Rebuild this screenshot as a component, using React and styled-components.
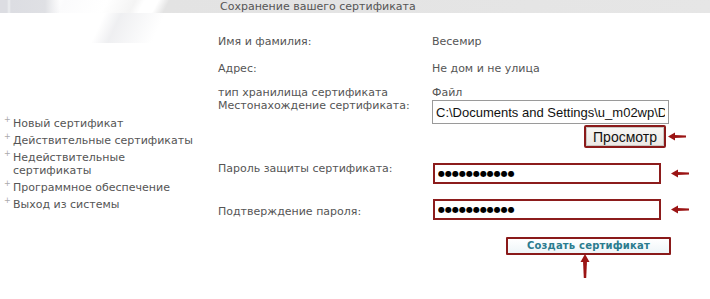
import styled, { createGlobalStyle } from 'styled-components'

const GlobalStyle = createGlobalStyle`
  html, body {
    margin: 0;
    padding: 0;
    background: #fff;
  }
  body {
    font-family: "DejaVu Sans", Verdana, sans-serif;
    font-size: 11px;
    color: #555;
  }
`

const navItems = [
  'Новый сертификат',
  'Действительные сертификаты',
  'Недействительные сертификаты',
  'Программное обеспечение',
  'Выход из системы',
]

const LeftArrow = () => (
  <svg width="19" height="9" viewBox="0 0 19 9">
    <polygon points="0,4.5 7,0.5 7,8.5" fill="#9b1414" />
    <polygon points="6,3 18,3.6 18,5.4 6,6" fill="#9b1414" />
  </svg>
)

const UpArrow = () => (
  <svg width="10" height="25" viewBox="0 0 10 25">
    <polygon points="5,0 9.5,8 0.5,8" fill="#9b1414" />
    <polygon points="3,7 7,7 6.2,24 3.8,24" fill="#9b1414" />
  </svg>
)

const App = () => {
  return (
    <Page>
      <GlobalStyle />
      <Header>
        <Title>Сохранение вашего сертификата</Title>
      </Header>
      <Body>
        <Sidebar>
          <NavList>
            {navItems.map(item => (
              <NavItem key={item}>
                <Marker>+</Marker>
                <NavLink>{item}</NavLink>
              </NavItem>
            ))}
          </NavList>
        </Sidebar>
        <Main>
          <Row top={22}>
            <Label>Имя и фамилия:</Label>
            <Value>Весемир</Value>
          </Row>
          <Row top={14}>
            <Label>Адрес:</Label>
            <Value>Не дом и не улица</Value>
          </Row>
          <Row top={11}>
            <Label>
              тип хранилища сертификата
              <br />
              Местонахождение сертификата:
            </Label>
            <Field>
              <Value>Файл</Value>
              <PathInput type="text" readOnly value="C:\Documents and Settings\u_m02wp\Desktop\cert.pfx" />
            </Field>
          </Row>
          <Row top={1}>
            <span />
            <BrowseLine>
              <Annotated>
                <BrowseButton type="button">Просмотр</BrowseButton>
                <SideArrow offset={2}>
                  <LeftArrow />
                </SideArrow>
              </Annotated>
            </BrowseLine>
          </Row>
          <Row top={15}>
            <Label shift={-1}>Пароль защиты сертификата:</Label>
            <Annotated>
              <PasswordInput type="text" readOnly value="●●●●●●●●●●●" />
              <SideArrow offset={1}>
                <LeftArrow />
              </SideArrow>
            </Annotated>
          </Row>
          <Row top={15}>
            <Label shift={6}>Подтверждение пароля:</Label>
            <Annotated>
              <PasswordInput type="text" readOnly value="●●●●●●●●●●●" />
              <SideArrow offset={1}>
                <LeftArrow />
              </SideArrow>
            </Annotated>
          </Row>
          <Row top={17}>
            <span />
            <SubmitLine>
              <Annotated>
                <SubmitButton type="button">Создать сертификат</SubmitButton>
                <BottomArrow>
                  <UpArrow />
                </BottomArrow>
              </Annotated>
            </SubmitLine>
          </Row>
        </Main>
      </Body>
    </Page>
  )
}

const Page = styled.div`
  width: 710px;
  height: 299px;
  overflow: hidden;
  background:
    linear-gradient(115deg, transparent 0, transparent 95px, rgba(225, 226, 230, 0.55) 110px, transparent 150px) 0 13px / 200px 30px no-repeat,
    #fff;
`

const Header = styled.div`
  height: 13px;
  display: flex;
  align-items: center;
  background:
    linear-gradient(90deg, #dcdde2 0, #dcdde2 7px, #eceef0 9px, #dcdde2 11px, #dfe0e4 45px, transparent 60px) no-repeat,
    linear-gradient(118deg, transparent 0, transparent 48px, #fbfbfc 58px, #ffffff 95px, #f4f4f4 120px, #ffffff 128px, #ffffff 140px, #e3e3e3 150px, #e6e6e6 100%);
`

const Title = styled.div`
  padding-left: 220px;
  font-size: 11px;
  line-height: 13px;
  color: #555;
  white-space: nowrap;
`

const Body = styled.div`
  display: flex;
`

const Sidebar = styled.div`
  width: 218px;
  flex: none;
  box-sizing: border-box;
  padding: 104px 4px 0 4px;
`

const NavList = styled.ul`
  list-style: none;
  margin: 0;
  padding: 0;
  display: flex;
  flex-direction: column;
  gap: 4px;
`

const NavItem = styled.li`
  display: flex;
  align-items: flex-start;
`

const Marker = styled.span`
  width: 9px;
  flex: none;
  font-size: 8px;
  line-height: 8px;
  color: #aaa;
  margin-top: -1px;
`

const NavLink = styled.span`
  max-width: 190px;
  line-height: 13px;
  color: #555;
  cursor: pointer;
`

const Main = styled.div`
  flex: 1;
  display: flex;
  flex-direction: column;
`

const Row = styled.div`
  display: grid;
  grid-template-columns: 214px 238px;
  margin-top: ${p => p.top}px;
  align-items: start;
`

const Label = styled.div`
  line-height: 13px;
  color: #555;
  white-space: nowrap;
  margin-top: ${p => p.shift || 0}px;
`

const Value = styled.div`
  line-height: 13px;
  color: #555;
  white-space: nowrap;
`

const Field = styled.div`
  display: flex;
  flex-direction: column;
  gap: 1px;
`

const PathInput = styled.input`
  width: 237px;
  height: 24px;
  box-sizing: border-box;
  margin: 0;
  padding: 0 3px;
  border: 1px solid #9a9a9a;
  font-family: "Liberation Sans", Arial, sans-serif;
  font-size: 13px;
  color: #111;
  background: #fff;
  outline: none;
`

const BrowseLine = styled.div`
  display: flex;
  justify-content: flex-end;
  padding-right: 4px;
`

const Annotated = styled.div`
  position: relative;
  display: inline-flex;
`

const SideArrow = styled.span`
  position: absolute;
  left: 100%;
  top: 50%;
  margin-top: -5px;
  margin-left: ${p => p.offset}px;
  display: flex;
`

const BottomArrow = styled.span`
  position: absolute;
  top: 100%;
  left: 74px;
  margin-top: -1px;
  display: flex;
`

const BrowseButton = styled.button`
  width: 82px;
  height: 23px;
  box-sizing: border-box;
  margin: 0;
  padding: 0;
  border: 2px solid #8a1a1a;
  border-radius: 2px;
  box-shadow: inset 0 0 0 1px #c9c6c2;
  background: linear-gradient(#f8f7f5, #ebe8e4);
  font-family: "Liberation Sans", Arial, sans-serif;
  font-size: 14px;
  color: #111;
`

const PasswordInput = styled.input`
  width: 228px;
  height: 21px;
  box-sizing: border-box;
  margin: 0 0 0 1px;
  padding: 0 3px;
  border: 2px solid #8c1c1c;
  background: #fff;
  font-family: "DejaVu Sans", sans-serif;
  font-size: 8px;
  letter-spacing: 0;
  color: #000;
  outline: none;
`

const SubmitLine = styled.div`
  display: flex;
  padding-left: 74px;
`

const SubmitButton = styled.button`
  width: 165px;
  height: 18px;
  box-sizing: border-box;
  margin: 0;
  padding: 0;
  border: 2px solid #8a1a1a;
  border-radius: 1px;
  background: linear-gradient(#ffffff, #eef5f8);
  font-family: "DejaVu Sans", Verdana, sans-serif;
  font-weight: bold;
  font-size: 10px;
  line-height: 14px;
  letter-spacing: 0.2px;
  color: #2b7c8f;
`

export default App
